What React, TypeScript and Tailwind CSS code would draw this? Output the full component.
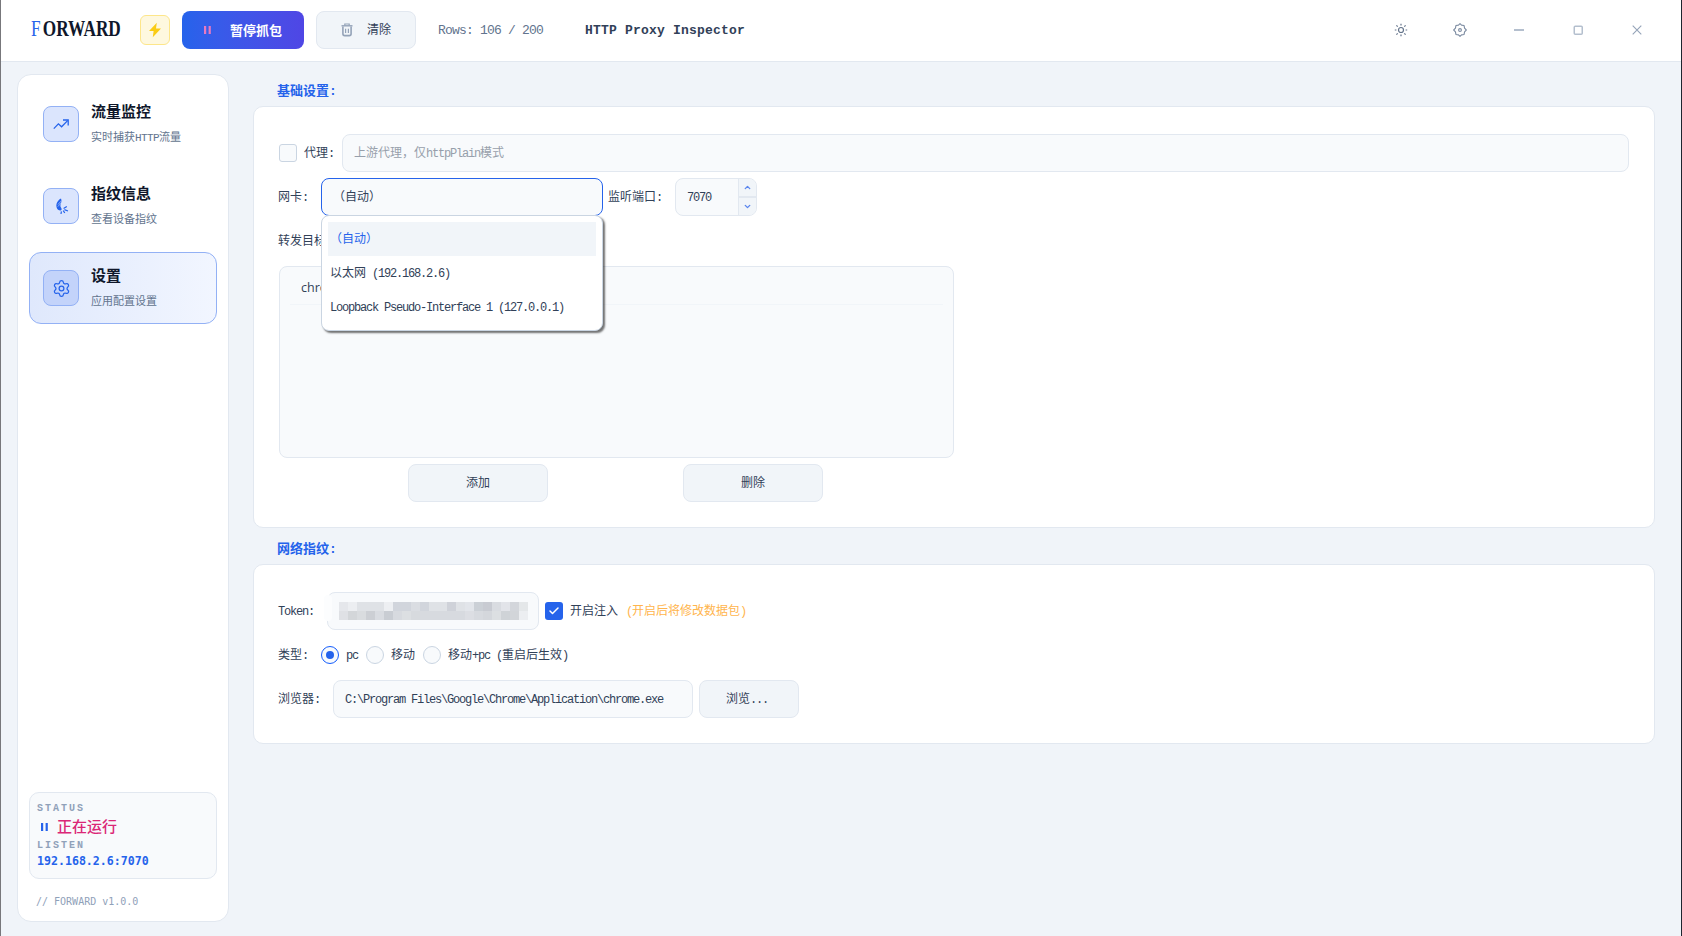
import React, { useState } from 'react';
import { Check, ChevronDown, ChevronUp, Settings } from 'lucide-react';
import clsx from 'clsx';

interface NavItem {
  id: string;
  title: string;
  desc: string;
  icon: React.ReactNode;
}

const TrendIcon = () => (
  <svg width="18" height="18" viewBox="0 0 18 18" fill="none" stroke="#2563eb" strokeWidth="1.3">
    <path d="M1.8 13.6 L6.4 8.8 L9.6 11.8 L15.6 5.6" />
    <path d="M11 5 H16.2 V10.4" />
  </svg>
);

const FingerprintIcon = () => (
  <svg width="18" height="18" viewBox="0 0 18 18" fill="none">
    <path d="M9 1.5 C5 3.5 3.2 8 5.2 11.8 C6.4 13.8 9.4 14 9.6 12.4 C9.8 11 8.2 10.4 8.4 8.6 C8.6 6.6 9.8 5 9.4 3 Z" fill="#2563eb" />
    <path d="M6 7.5 L9 4.2 M5.8 9.6 L9.4 5.8" stroke="#dbe5fd" strokeWidth="0.6" />
    <path d="M11.6 11.4 L14.8 9.4 M12.4 12.6 L16 14 M11.2 13.6 L12.8 16 M9.4 14.4 L9 17" stroke="#2563eb" strokeWidth="1.2" />
  </svg>
);

const BoltIcon = () => (
  <svg width="14" height="16" viewBox="0 0 14 16">
    <path d="M8.8 0.8 L1 9 H5.6 L4.8 15.2 L13 6.6 H8 Z" fill="#facc15" />
  </svg>
);

const TrashIcon = () => (
  <svg width="12" height="14" viewBox="0 0 12 14" fill="none" stroke="#94a3b8">
    <path d="M0.5 2.8H11.5" strokeWidth="1.4" />
    <path d="M3.8 2.5V1H8.2V2.5" strokeWidth="1.2" />
    <path d="M1.9 3.4V10.8Q1.9 12.6 3.7 12.6H8.3Q10.1 12.6 10.1 10.8V3.4" strokeWidth="1.6" />
    <path d="M4.6 5.8V10M7.4 5.8V10" strokeWidth="1.2" />
  </svg>
);

const SunIcon = () => (
  <svg width="14" height="14" viewBox="0 0 14 14" fill="none" stroke="#64748b" strokeWidth="1.2">
    <circle cx="7" cy="7" r="2.5" />
    <path d="M7 0.8V2.4M7 11.6V13.2M0.8 7H2.4M11.6 7H13.2M2.4 2.4L3.7 3.7M10.3 10.3L11.6 11.6M2.4 11.6L3.7 10.3M10.3 3.7L11.6 2.4" />
  </svg>
);

const navItems: NavItem[] = [
  { id: 'traffic', title: '流量监控', desc: '实时捕获HTTP流量', icon: <TrendIcon /> },
  { id: 'fingerprint', title: '指纹信息', desc: '查看设备指纹', icon: <FingerprintIcon /> },
  { id: 'settings', title: '设置', desc: '应用配置设置', icon: <Settings size={19} color="#2563eb" strokeWidth={1.6} /> }
];

const adapters = ['（自动）', '以太网 (192.168.2.6)', 'Loopback Pseudo-Interface 1 (127.0.0.1)'];

const tokenMosaic = [
  ['#e5e7eb', '#eceef1', '#dfe2e6', '#dfe2e6', '#dfe2e6', '#edeff2', '#d1d5dc', '#d1d5dc', '#dadde2', '#d1d5dc', '#dfe2e6', '#dfe2e6', '#cfd2d9', '#dfe2e6', '#e2e5ea', '#cbd0d6', '#c8cbd2', '#d9dce1', '#e2e4e9', '#d3d6db', '#e4e7e9'],
  ['#dfe1e5', '#d3d6d9', '#d9dcdf', '#cccfd4', '#d9dce1', '#c9cdd3', '#d7dadf', '#dcdfe2', '#d7dade', '#d7dadf', '#d7dadf', '#d7dadf', '#d7dadf', '#d7dadf', '#dcdee3', '#d7dadf', '#d4d7dc', '#dcdfe2', '#cfd3d7', '#d2d5d9', '#eceef1']
];

// Half-width latin next to full-width CJK: ascii runs take exactly half an em.
const Txt: React.FC<{ children: string; latin?: string }> = ({ children, latin = 'tracking-[-0.1em]' }) => (
  <span className="inline-block pt-[2px] whitespace-pre">
    {children.split(/([\x20-\x7e]+)/).map((part, i) =>
      /^[\x20-\x7e]+$/.test(part) ?
        <span key={i} className={latin}>{part}</span> :
        part
    )}
  </span>
);

const Label: React.FC<{ className?: string; children: string }> = ({ className, children }) => (
  <span className={clsx('shrink-0', className)}>
    <Txt>{children}</Txt>
  </span>
);

const GhostButton: React.FC<{ className?: string; children: React.ReactNode }> = ({ className, children }) => (
  <button className={clsx('flex h-[38px] shrink-0 items-center justify-center rounded-lg border border-slate-200 bg-slate-100', className)}>
    {children}
  </button>
);

const Pause: React.FC<{ className: string }> = ({ className }) => (
  <svg width="8" height="8" viewBox="0 0 8 8" className={className} fill="currentColor">
    <rect x="0" y="0" width="2.2" height="8" />
    <rect x="4.6" y="0" width="2.2" height="8" />
  </svg>
);

const Radio: React.FC<{ checked: boolean; onClick: () => void }> = ({ checked, onClick }) => (
  <button
    onClick={onClick}
    className={clsx(
      'flex size-[18px] shrink-0 items-center justify-center rounded-full border bg-slate-50',
      checked ? 'border-blue-600' : 'border-slate-300'
    )}>
    {checked && <span className="size-2 rounded-full bg-[#2563eb]" />}
  </button>
);

const Header = () => (
  <header className="flex h-[62px] shrink-0 items-center border-b border-slate-200 bg-white pb-px pl-[30px] pr-[37px]">
    <div className="w-[109px] shrink-0 pb-[3px]">
      <span className="inline-block origin-left scale-x-[0.75] font-['Liberation_Serif',serif] text-[23px] leading-none font-bold whitespace-nowrap text-slate-900">
        <span className="mr-[3px] font-normal text-[#2563eb]">F</span>ORWARD
      </span>
    </div>
    <div className="flex size-[30px] shrink-0 items-center justify-center rounded-md border border-[#fde68a] bg-[#fef8df]">
      <BoltIcon />
    </div>
    <button className="ml-3 flex h-[38px] w-[122px] shrink-0 items-center rounded-lg bg-linear-to-r from-[#2563eb] to-[#4f46e5] pl-[22px] text-[13px] font-bold text-white">
      <Pause className="mr-[18px] text-[#e879c0]" />
      <Txt>暂停抓包</Txt>
    </button>
    <GhostButton className="ml-3 w-[100px] gap-3.5">
      <TrashIcon />
      <Txt>清除</Txt>
    </GhostButton>
    <span className="ml-[22px] w-[147px] shrink-0 pt-px text-[13px] tracking-[-0.8px] whitespace-pre text-slate-500">Rows: 106 / 200</span>
    <span className="shrink-0 pt-px text-[13px] font-bold tracking-[0.2px] text-slate-700">HTTP Proxy Inspector</span>
    <div className="ml-auto flex items-center gap-[45px]">
      <SunIcon />
      <svg width="14" height="14" viewBox="0 0 24 24" fill="none" stroke="#7c8ba1" strokeWidth="1.9">
        <path d="M12 1.2 L14.6 3.6 L19 4.4 L19.8 8.8 L22.8 12 L19.8 15.2 L19 19.6 L14.6 20.4 L12 22.8 L9.4 20.4 L5 19.6 L4.2 15.2 L1.2 12 L4.2 8.8 L5 4.4 L9.4 3.6 Z" strokeLinejoin="round" />
        <circle cx="12" cy="12" r="2.4" />
      </svg>
      <svg width="14" height="14" viewBox="0 0 14 14" stroke="#b4bfce" strokeWidth="2"><path d="M2 7H12" /></svg>
      <svg width="14" height="14" viewBox="0 0 14 14" fill="none" stroke="#b4bfce" strokeWidth="1.5"><rect x="3.25" y="3.25" width="8" height="8" rx="1" /></svg>
      <svg width="14" height="14" viewBox="0 0 14 14" stroke="#94a3b8" strokeWidth="1.1"><path d="M2.7 2.7L11.3 11.3M11.3 2.7L2.7 11.3" /></svg>
    </div>
  </header>
);

const Sidebar: React.FC<{ active: string; onSelect: (id: string) => void }> = ({ active, onSelect }) => (
  <aside className="flex w-[212px] shrink-0 flex-col rounded-[14px] border border-slate-200 bg-white px-[11px] pt-[13px]">
    <nav className="flex flex-col gap-2.5">
      {navItems.map((item) => (
        <button
          key={item.id}
          onClick={() => onSelect(item.id)}
          className={clsx(
            'flex h-[72px] items-center rounded-xl border px-[13px] text-left',
            item.id === active ? 'border-[#93b1f5] bg-linear-to-r from-[#dfe8fc] to-[#f2f6ff]' : 'border-transparent'
          )}>
          <span
            className={clsx(
              'flex size-9 shrink-0 items-center justify-center rounded-lg border border-[#93b1f5]',
              item.id === active ? 'bg-[#c3d3fa]' : 'bg-[#dbe5fd]'
            )}>
            {item.icon}
          </span>
          <span className="ml-3 flex flex-col gap-2.5 pt-[2px]">
            <span className="text-[15px] leading-none font-bold text-slate-900">{item.title}</span>
            <span className="text-[11px] leading-none text-slate-500"><Txt latin="tracking-[-0.6px]">{item.desc}</Txt></span>
          </span>
        </button>
      ))}
    </nav>

    <div className="mt-auto flex h-[87px] flex-col rounded-[10px] border border-slate-200 bg-slate-50 px-[7px] pt-[11px] leading-none">
      <span className="text-[10px] font-bold tracking-[2px] text-slate-400">STATUS</span>
      <span className="mt-[3px] flex h-5 items-center gap-2 pl-1 text-[15px] font-medium text-[#db2777]">
        <Pause className="text-[#2563eb]" />
        <Txt>正在运行</Txt>
      </span>
      <span className="mt-1 text-[10px] font-bold tracking-[2px] text-slate-400">LISTEN</span>
      <span className="mt-[5px] font-['DejaVu_Sans_Mono',monospace] text-[11.6px] font-bold text-[#2563eb]">192.168.2.6:7070</span>
    </div>
    <div className="mt-[18px] mb-[14px] pl-[7px] font-['DejaVu_Sans_Mono',monospace] text-[10px] leading-none text-slate-400">
      // FORWARD v1.0.0
    </div>
  </aside>
);

const AdapterSelect = () => {
  const [selected, setSelected] = useState(0);

  return (
    <div className="relative ml-2 w-[282px] shrink-0">
      <div className="flex h-[38px] items-center rounded-lg border border-[#2563eb] bg-slate-50 pl-[11px]">
        <Txt>{adapters[selected]}</Txt>
      </div>
      <ul className="absolute top-[37px] left-0 z-10 w-[282px] rounded-lg border border-slate-300 bg-white px-1.5 py-1.5 shadow-[2px_2px_2px_0px_rgba(0,0,0,0.55)]">
        {adapters.map((name, i) => (
          <li
            key={name}
            onClick={() => setSelected(i)}
            className={clsx('flex h-[34px] items-center pl-[2px]', i === selected && 'bg-slate-100 text-[#2563eb]')}>
            <Txt>{name}</Txt>
          </li>
        ))}
      </ul>
    </div>
  );
};

const BasicSettings = () => (
  <section className="h-[422px] rounded-[10px] border border-slate-200 bg-white pt-[27px] pr-[25px] pl-6">
    <div className="ml-px flex h-[38px] items-center">
      <span className="size-[18px] shrink-0 rounded-[3px] border border-slate-300 bg-slate-50" />
      <Label className="ml-[7px] w-[38px]">代理:</Label>
      <div className="flex h-[38px] flex-1 items-center rounded-lg border border-slate-200 bg-slate-50 pl-[11px] text-[#979fab]">
        <Txt>上游代理，仅httpPlain模式</Txt>
      </div>
    </div>

    <div className="mt-1.5 flex items-center">
      <Label className="w-[35px]">网卡:</Label>
      <AdapterSelect />
      <Label className="ml-[5px] w-[67px]">监听端口:</Label>
      <div className="flex h-[38px] w-[82px] shrink-0 overflow-hidden rounded-lg border border-slate-200 bg-slate-50">
        <span className="flex flex-1 items-center pl-[11px]"><Txt>7070</Txt></span>
        <span className="flex w-[18px] flex-col border-l border-slate-200 bg-slate-100 text-[#5b86ee]">
          <span className="flex flex-1 items-center justify-center border-b-2 border-slate-200"><ChevronUp size={9} strokeWidth={3.6} /></span>
          <span className="flex flex-1 items-center justify-center pt-px"><ChevronDown size={9} strokeWidth={3.6} /></span>
        </span>
      </div>
    </div>

    <div className="flex h-[50px] items-center"><Label>转发目标</Label></div>

    <div className="ml-px h-[192px] w-[675px] rounded-lg border border-slate-200 bg-slate-50 px-2.5">
      <div className="flex h-[38px] items-center border-b border-slate-100 pt-[5px] pl-[11px] font-['Open_Sans',sans-serif] text-[12.5px]">
        chrome.exe
      </div>
    </div>

    <div className="mt-1.5 flex gap-[135px] pl-[130px]">
      <GhostButton className="w-[140px]"><Txt>添加</Txt></GhostButton>
      <GhostButton className="w-[140px]"><Txt>删除</Txt></GhostButton>
    </div>
  </section>
);

const FingerprintSettings = () => {
  const [type, setType] = useState('pc');
  const [inject, setInject] = useState(true);

  return (
    <section className="h-[180px] rounded-[10px] border border-slate-200 bg-white pt-[27px] pl-6">
      <div className="flex h-[38px] items-center">
        <Label className="w-[49px]">Token:</Label>
        <div className="relative flex h-[38px] w-[212px] shrink-0 flex-col justify-center rounded-lg border border-slate-200 bg-slate-50 pl-[11px]">
          <span className="absolute top-[2px] -left-1 h-[26px] w-2 rounded-md bg-[#fcfdfe]" />
          {tokenMosaic.map((row, y) => (
            <div key={y} className="flex">
              {row.map((color, x) => (
                <span key={x} className="size-[9px]" style={{ backgroundColor: color }} />
              ))}
            </div>
          ))}
        </div>
        <button
          onClick={() => setInject(!inject)}
          className="mx-1.5 flex size-[18px] shrink-0 items-center justify-center rounded-[3px] bg-[#2563eb] text-white">
          {inject && <Check size={12} strokeWidth={3} />}
        </button>
        <Label className="ml-px">开启注入</Label>
        <Label className="ml-2 text-[#ffb54d]">(开启后将修改数据包)</Label>
      </div>

      <div className="mt-1.5 flex h-[38px] items-center">
        <Label className="w-[43px]">类型:</Label>
        <Radio checked={type === 'pc'} onClick={() => setType('pc')} />
        <Label className="w-[27px] pl-[7px]">pc</Label>
        <Radio checked={type === 'mobile'} onClick={() => setType('mobile')} />
        <Label className="w-[39px] pl-[7px]">移动</Label>
        <Radio checked={type === 'both'} onClick={() => setType('both')} />
        <Label className="pl-[7px]">移动+pc (重启后生效)</Label>
      </div>

      <div className="mt-1.5 flex h-[38px] items-center">
        <Label className="w-[55px]">浏览器:</Label>
        <div className="flex h-[38px] w-[360px] shrink-0 items-center rounded-lg border border-slate-200 bg-slate-50 pl-[11px]">
          <Txt>{'C:\\Program Files\\Google\\Chrome\\Application\\chrome.exe'}</Txt>
        </div>
        <GhostButton className="ml-1.5 w-[100px] pr-1"><Txt>浏览...</Txt></GhostButton>
      </div>
    </section>
  );
};

export default function App() {
  const [page, setPage] = useState('settings');

  return (
    <div className="flex h-[936px] w-[1682px] flex-col overflow-hidden border-r border-l border-r-[#1e2530] border-l-[#77777b] bg-[#f0f4f9] font-['Liberation_Mono','Noto_Sans_CJK_SC',monospace] text-[12px] leading-none text-slate-700">
      <Header />
      <div className="flex flex-1 pt-3 pr-[26px] pb-3.5 pl-4">
        <Sidebar active={page} onSelect={setPage} />
        <main className="ml-6 flex flex-1 flex-col">
          <h2 className="flex h-8 items-center pl-6 text-[13px] font-bold text-[#2563eb]"><Txt latin="">基础设置:</Txt></h2>
          <BasicSettings />
          <h2 className="flex h-9 items-center pt-1 pl-6 text-[13px] font-bold text-[#2563eb]"><Txt latin="">网络指纹:</Txt></h2>
          <FingerprintSettings />
        </main>
      </div>
    </div>
  );
}
